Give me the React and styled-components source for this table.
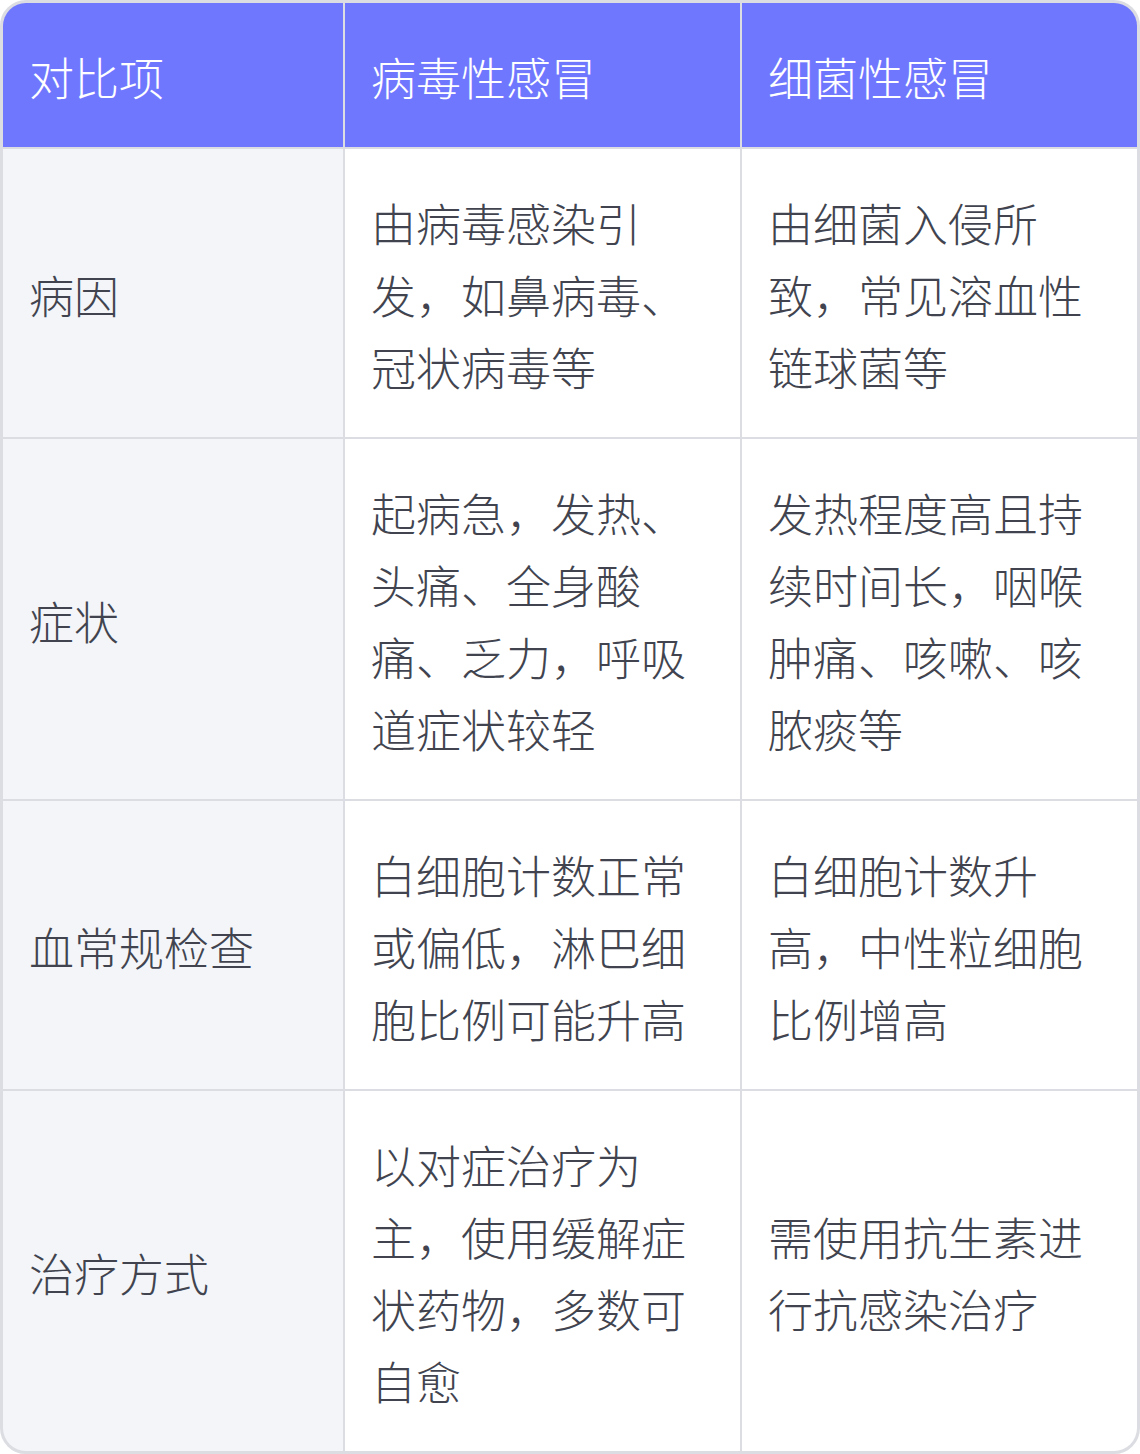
import React from 'react';
import styled, { createGlobalStyle } from 'styled-components';

const GlobalStyle = createGlobalStyle`
  html, body {
    margin: 0;
    padding: 0;
    background: #ffffff;
  }
  body {
    font-family: "Noto Sans CJK SC", "Noto Sans", sans-serif;
  }
`;

const Table = styled.div`
  width: 1140px;
  box-sizing: border-box;
  border: 3px solid #dcdde2;
  border-radius: 26px;
  overflow: hidden;
  display: grid;
  grid-template-columns: 340px 395px 395px;
  gap: 2px;
  background: #dcdde2;
`;

const Cell = styled.div`
  display: flex;
  align-items: center;
  box-sizing: border-box;
  padding: 38px 28px 34px 26px;
  font-size: 45px;
  line-height: 72px;
  font-weight: 200;
  color: ${props => (props.head ? '#ffffff' : '#41444f')};
  background: ${props => {
    if (props.head) return '#7077ff';
    if (props.label) return '#f4f5f9';
    return '#ffffff';
  }};
`;

const headers = ['对比项', '病毒性感冒', '细菌性感冒'];

const rows = [
  ['病因', '由病毒感染引发，如鼻病毒、冠状病毒等', '由细菌入侵所致，常见溶血性链球菌等'],
  ['症状', '起病急，发热、头痛、全身酸痛、乏力，呼吸道症状较轻', '发热程度高且持续时间长，咽喉肿痛、咳嗽、咳脓痰等'],
  ['血常规检查', '白细胞计数正常或偏低，淋巴细胞比例可能升高', '白细胞计数升高，中性粒细胞比例增高'],
  ['治疗方式', '以对症治疗为主，使用缓解症状药物，多数可自愈', '需使用抗生素进行抗感染治疗'],
];

const App = () => (
  <>
    <GlobalStyle />
    <Table>
      {headers.map(h => (
        <Cell head key={h}>{h}</Cell>
      ))}
      {rows.map(row => row.map((text, i) => (
        <Cell label={i === 0} key={row[0] + i}>{text}</Cell>
      )))}
    </Table>
  </>
);

export default App;
